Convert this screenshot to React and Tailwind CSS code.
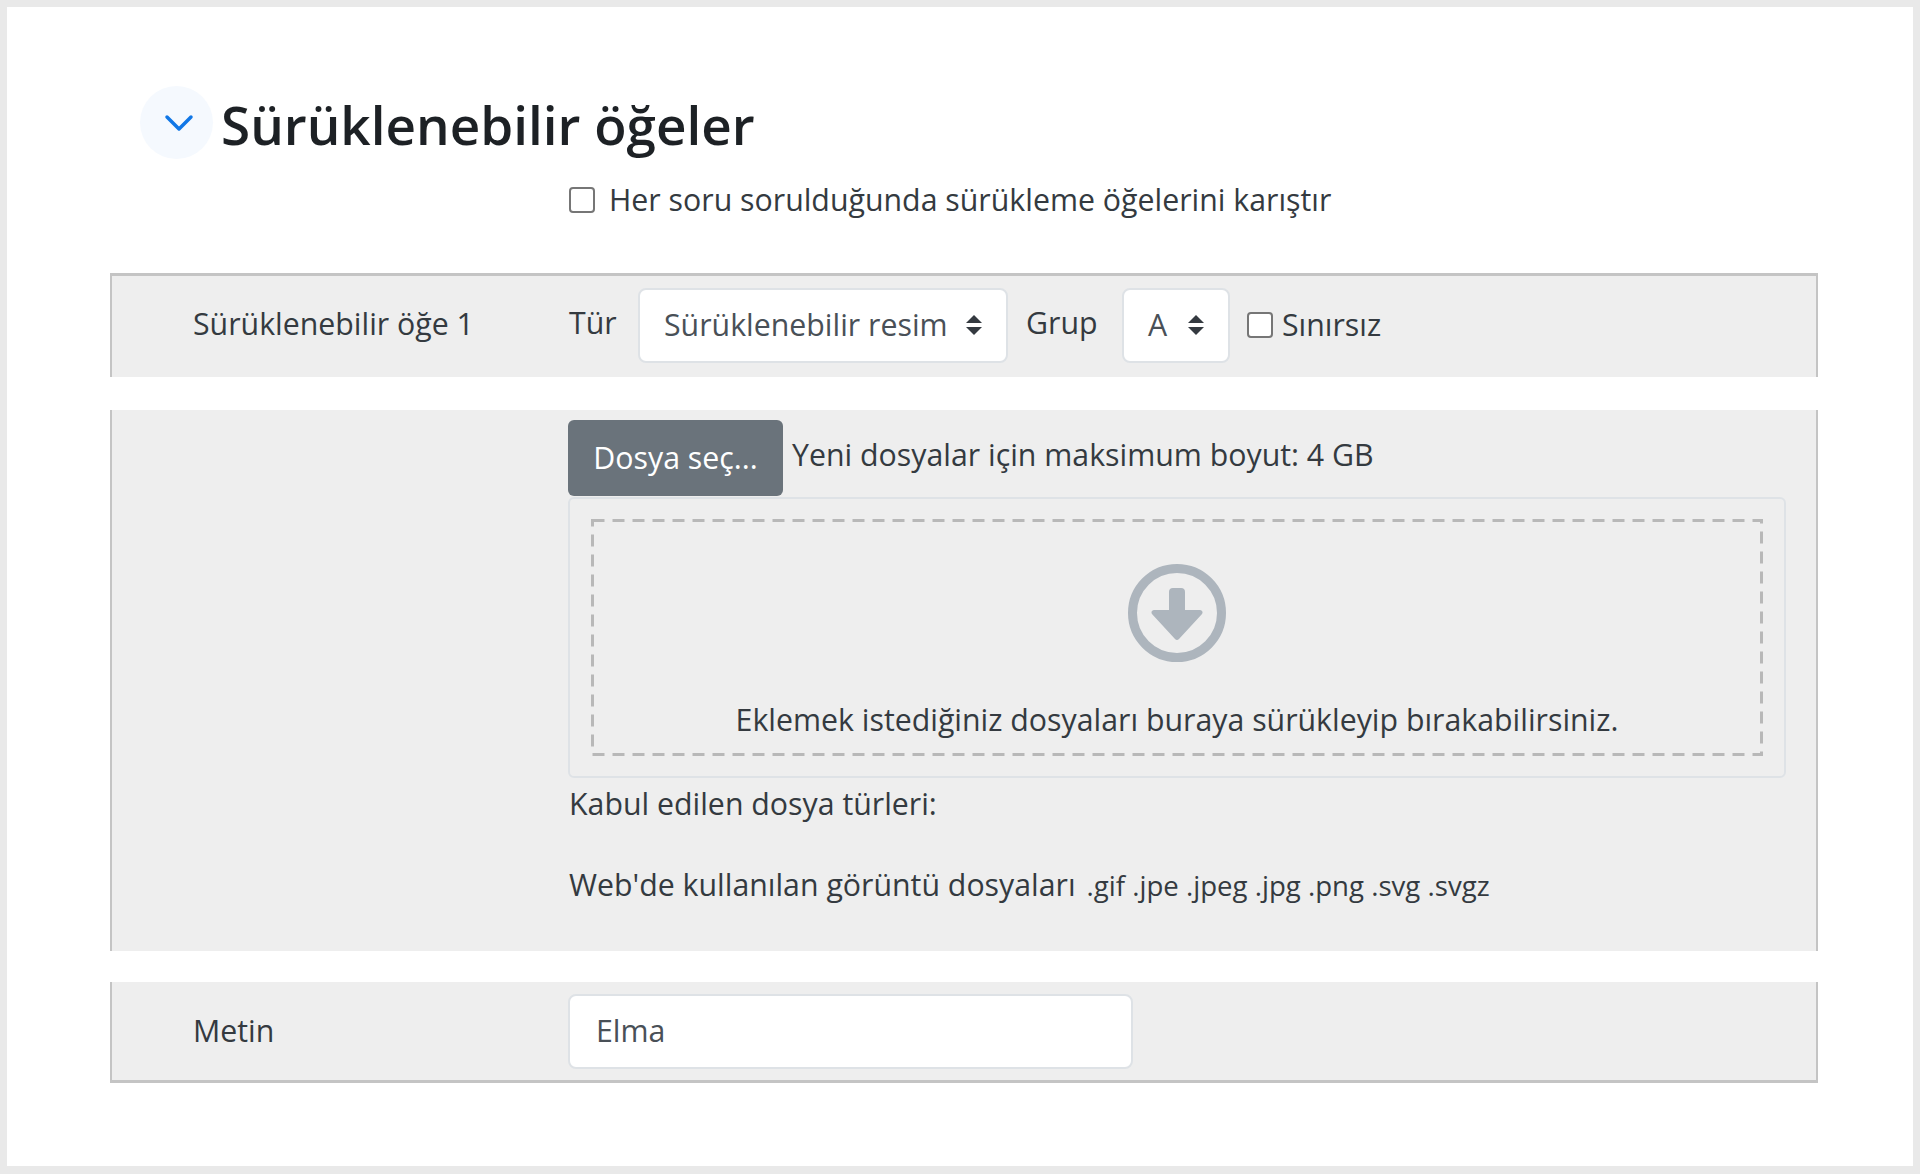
import React from "react";

const font = "font-['Open_Sans',sans-serif]";

const SelectArrows = () => (
  <svg className="w-[16px] h-[20px] shrink-0" viewBox="0 0 4 5" fill="#343a40">
    <path d="M2 0L0 2h4zm0 5L0 3h4z" />
  </svg>
);

const Checkbox = () => (
  <span className="block w-[26px] h-[26px] shrink-0 rounded-[4px] border-2 border-[#767676] bg-white" />
);

const Select = ({ value, className }) => (
  <div className={`h-[75px] flex items-center justify-between rounded-[8px] border-2 border-[#dee2e6] bg-white text-[#495057] ${className}`}>
    <span>{value}</span>
    <SelectArrows />
  </div>
);

const DownloadIcon = () => (
  <svg className="w-[98px] h-[98px]" viewBox="0 0 98 98">
    <circle cx="49" cy="49" r="44.5" fill="none" stroke="#adb5bd" strokeWidth="9" />
    <path
      d="M41 28a4 4 0 0 1 4-4h8a4 4 0 0 1 4 4v18h15a2.500 2.500 0 0 1 1.800 4.300L51 75a3 3 0 0 1-4 0L24.200 50.300A2.500 2.500 0 0 1 26 46h15z"
      fill="#adb5bd"
    />
  </svg>
);

export default function App() {
  return (
    <div className={`${font} h-[1174px] bg-[#e9e9e9] pt-[7px] px-[7px] pb-[8px] text-[30.3px] leading-[42px] text-[#343a40]`}>
      <div className="h-full bg-white pt-[79px] pl-[103px] pr-[95px]">
        <div className="flex items-center h-[73px] pl-[30px]">
          <span className="w-[73px] h-[73px] rounded-full bg-[#f5f9fe] flex items-center justify-center">
            <svg className="w-[30px] h-[18px] ml-[5px]" viewBox="0 0 30 18" fill="none" strokeWidth="3.500" strokeLinecap="round" strokeLinejoin="round">
              <path d="M3 3l12 12L27 3" stroke="#1177e6" />
            </svg>
          </span>
          <h2 className="ml-[8px] mt-[3px] text-[53px] leading-[73px] font-semibold text-[#1d2125]">Sürüklenebilir öğeler</h2>
        </div>

        <div className="mt-[20px] ml-[459px] flex items-center h-[42px]">
          <Checkbox />
          <span className="ml-[14px]">Her soru sorulduğunda sürükleme öğelerini karıştır</span>
        </div>

        <div className="mt-[52px] h-[104px] flex items-center bg-[#eeeeee] border-x-2 border-t-[3px] border-[#c4c4c4]">
          <div className="w-[456px] pl-[81px] shrink-0 -mt-[6px]">Sürüklenebilir öğe 1</div>
          <div className="flex items-center -mt-[3px]">
            <span className="w-[70px] pl-px -mt-[5px]">Tür</span>
            <Select value="Sürüklenebilir resim" className="w-[370px] pl-[24px] pr-[24px]" />
            <span className="w-[114px] pl-[18px] -mt-[5px]">Grup</span>
            <Select value="A" className="w-[108px] pl-[24px] pr-[24px]" />
            <span className="ml-[17px]"><Checkbox /></span>
            <span className="ml-[9px]">Sınırsız</span>
          </div>
        </div>

        <div className="mt-[33px] h-[541px] bg-[#eeeeee] border-x-2 border-[#c4c4c4] pt-[10px] pl-[456px] pr-[30px]">
          <div className="flex items-start">
            <div className="w-[215px] h-[76px] bg-[#6a737b] rounded-[6px] text-white flex items-center justify-center">Dosya seç...</div>
            <span className="ml-[9px] mt-[14px]">Yeni dosyalar için maksimum boyut: 4 GB</span>
          </div>
          <div className="mt-px h-[281px] border-2 border-[#dee2e6] rounded-[6px] pt-[20px] pl-[21px] pr-[21px]">
            <div className="relative h-[237px] flex flex-col items-center pt-[45px]">
              <svg className="absolute inset-0 w-full h-full" fill="none">
                <rect x="1.5" y="1.5" width="calc(100% - 3px)" height="calc(100% - 3px)" stroke="#b8b8b8" strokeWidth="3" strokeDasharray="12 8" />
              </svg>
              <DownloadIcon />
              <div className="mt-[37px]">Eklemek istediğiniz dosyaları buraya sürükleyip bırakabilirsiniz.</div>
            </div>
          </div>
          <div className="mt-[5px] pl-px">Kabul edilen dosya türleri:</div>
          <div className="mt-[39px] pl-px flex items-baseline">
            <span>Web'de kullanılan görüntü dosyaları</span>
            <span className="ml-[11px] text-[27.6px]">.gif .jpe .jpeg .jpg .png .svg .svgz</span>
          </div>
        </div>

        <div className="mt-[31px] h-[101px] flex items-center bg-[#eeeeee] border-x-2 border-b-[3px] border-[#c4c4c4]">
          <div className="w-[456px] pl-[81px] shrink-0">Metin</div>
          <div className="w-[565px] h-[75px] rounded-[8px] border-2 border-[#dee2e6] bg-white pl-[26px] flex items-center text-[#495057]">Elma</div>
        </div>
      </div>
    </div>
  );
}
